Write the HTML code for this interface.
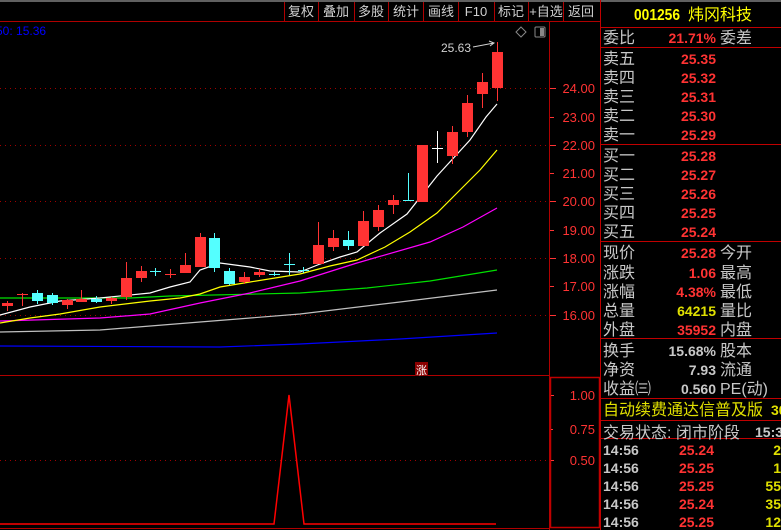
<!DOCTYPE html>
<html><head><meta charset="utf-8">
<style>
html,body{margin:0;padding:0;background:#000;width:781px;height:530px;overflow:hidden}
svg{display:block}
text{font-family:"Liberation Sans","Noto Sans CJK SC",sans-serif}
.cn{font-size:16px;fill:#c8c8c8}
.num{font-size:14px;font-weight:bold}
</style></head><body>
<svg width="781" height="530" viewBox="0 0 781 530" xmlns="http://www.w3.org/2000/svg">
<rect width="781" height="530" fill="#000"/>
<rect x="0" y="0" width="781" height="2" fill="#606060"/>
<g stroke="#b00000" stroke-width="1" shape-rendering="crispEdges">
<line x1="0" y1="21.5" x2="600" y2="21.5"/>
<line x1="284.5" y1="2" x2="284.5" y2="21"/>
<line x1="318.5" y1="2" x2="318.5" y2="21"/>
<line x1="354.5" y1="2" x2="354.5" y2="21"/>
<line x1="388.5" y1="2" x2="388.5" y2="21"/>
<line x1="423.5" y1="2" x2="423.5" y2="21"/>
<line x1="458.5" y1="2" x2="458.5" y2="21"/>
<line x1="494.5" y1="2" x2="494.5" y2="21"/>
<line x1="528.5" y1="2" x2="528.5" y2="21"/>
<line x1="563.5" y1="2" x2="563.5" y2="21"/>
<line x1="549.5" y1="22" x2="549.5" y2="530"/>
<line x1="0" y1="375.5" x2="549" y2="375.5"/>
</g>
<g font-size="13" fill="#d0d0d0">
<text x="301" y="16" text-anchor="middle">复权</text>
<text x="336" y="16" text-anchor="middle">叠加</text>
<text x="371" y="16" text-anchor="middle">多股</text>
<text x="406" y="16" text-anchor="middle">统计</text>
<text x="441" y="16" text-anchor="middle">画线</text>
<text x="476" y="16" text-anchor="middle">F10</text>
<text x="511" y="16" text-anchor="middle">标记</text>
<text x="546" y="16" text-anchor="middle">+自选</text>
<text x="581" y="16" text-anchor="middle">返回</text>
</g>
<text x="-4" y="35" font-size="12" fill="#0000ff">50: 15.36</text>
<path d="M521 27 L526 32 L521 37 L516 32 Z" fill="none" stroke="#888" stroke-width="1"/>
<rect x="535" y="27" width="10" height="10" rx="1" fill="none" stroke="#888"/>
<rect x="540" y="28" width="4" height="8" fill="#888"/>
<g stroke="#a00000" stroke-width="1" stroke-dasharray="1,4" shape-rendering="crispEdges">
<line x1="0" y1="88.5" x2="549" y2="88.5"/>
<line x1="0" y1="145.5" x2="549" y2="145.5"/>
<line x1="0" y1="201.5" x2="549" y2="201.5"/>
<line x1="0" y1="258.5" x2="549" y2="258.5"/>
<line x1="0" y1="315.5" x2="549" y2="315.5"/>
<line x1="0" y1="460.5" x2="549" y2="460.5"/>
</g>
<g stroke="#ff3333" shape-rendering="crispEdges">
<line x1="550" y1="88.5" x2="556" y2="88.5"/><line x1="550" y1="117.5" x2="554" y2="117.5"/>
<line x1="550" y1="145.5" x2="556" y2="145.5"/><line x1="550" y1="173.5" x2="554" y2="173.5"/>
<line x1="550" y1="201.5" x2="556" y2="201.5"/><line x1="550" y1="230.5" x2="554" y2="230.5"/>
<line x1="550" y1="258.5" x2="556" y2="258.5"/><line x1="550" y1="286.5" x2="554" y2="286.5"/>
<line x1="550" y1="315.5" x2="556" y2="315.5"/>
</g>
<g font-size="13" fill="#ff3333" text-anchor="end">
<text x="595" y="93">24.00</text><text x="595" y="122">23.00</text>
<text x="595" y="150">22.00</text><text x="595" y="178">21.00</text>
<text x="595" y="206">20.00</text><text x="595" y="235">19.00</text>
<text x="595" y="263">18.00</text><text x="595" y="291">17.00</text>
<text x="595" y="320">16.00</text>
</g>
<g fill="none" stroke-width="1.2">
<polyline stroke="#0000ff" points="0,346 220,347 300,344 400,339 497,333"/>
<polyline stroke="#c0c0c0" points="0,332 100,330 200,322 300,314 400,302 497,290"/>
<polyline stroke="#00e000" points="0,298 130,298 170,296 300,293 367,288 430,281 497,270"/>
<polyline stroke="#ff00ff" points="0,321 100,318 150,314 200,303 250,293 300,281 357,263 430,242 463,227 497,208"/>
<polyline stroke="#ffff00" points="0,323 30,318 60,314 100,307 150,301 180,298 200,294 220,287 250,282 300,274 330,266 357,260 385,247 410,232 437,213 460,190 480,170 497,150"/>
<polyline stroke="#ffffff" points="0,315 30,307 60,301 100,298 150,293 170,287 190,282 200,270 220,263 250,267 270,271 300,272 320,264 340,257 357,252 380,233 407,214 437,176 470,140 486,117 497,104"/>
</g>
<g shape-rendering="crispEdges" id="c"></g>
<text x="441" y="52" font-size="12" fill="#d0d0d0">25.63</text>
<path d="M473 47 L494 43 M489 41 L494 43 L490 46" stroke="#d0d0d0" fill="none"/>
<rect x="415" y="362" width="13" height="14" fill="#8b0000"/>
<text x="421.5" y="374" font-size="11" fill="#fff" text-anchor="middle">涨</text>
<rect x="550.5" y="377.5" width="49" height="150" fill="none" stroke="#c00000" stroke-width="1.5"/>
<g stroke="#ff3333" shape-rendering="crispEdges">
<line x1="551" y1="395.5" x2="554" y2="395.5"/><line x1="551" y1="429.5" x2="553" y2="429.5"/><line x1="551" y1="460.5" x2="554" y2="460.5"/>
</g>
<g font-size="13" fill="#ff3333" text-anchor="end">
<text x="595" y="400">1.00</text><text x="595" y="434">0.75</text><text x="595" y="465">0.50</text>
</g>
<polyline fill="none" stroke="#ff0000" stroke-width="1.5" points="0,524 274,524 289,395 304,524 496,524"/>
<line x1="0" y1="528.5" x2="549" y2="528.5" stroke="#b00000"/>
<g stroke="#c00000" stroke-width="1" shape-rendering="crispEdges">
<line x1="600.5" y1="0" x2="600.5" y2="530"/>
<line x1="600" y1="27.5" x2="781" y2="27.5"/>
<line x1="600" y1="47.5" x2="781" y2="47.5"/>
<line x1="600" y1="144.5" x2="781" y2="144.5"/>
<line x1="600" y1="241.5" x2="781" y2="241.5"/>
<line x1="600" y1="338.5" x2="781" y2="338.5"/>
<line x1="600" y1="398.5" x2="781" y2="398.5"/>
<line x1="600" y1="420.5" x2="781" y2="420.5"/>
<line x1="600" y1="438.5" x2="781" y2="438.5"/>
</g>
<text x="634" y="20" font-size="16" font-weight="bold" fill="#ffff00" textLength="46" lengthAdjust="spacingAndGlyphs">001256</text>
<text x="688" y="20" font-size="16" fill="#ffff00">炜冈科技</text>
<g class="cn">
<text x="603" y="43">委比</text><text x="720" y="43">委差</text>
<text x="603" y="64">卖五</text><text x="603" y="83">卖四</text><text x="603" y="102">卖三</text><text x="603" y="121">卖二</text><text x="603" y="140">卖一</text>
<text x="603" y="161">买一</text><text x="603" y="180">买二</text><text x="603" y="199">买三</text><text x="603" y="218">买四</text><text x="603" y="237">买五</text>
<text x="603" y="258">现价</text><text x="720" y="258">今开</text>
<text x="603" y="278">涨跌</text><text x="720" y="278">最高</text>
<text x="603" y="297">涨幅</text><text x="720" y="297">最低</text>
<text x="603" y="316">总量</text><text x="720" y="316">量比</text>
<text x="603" y="335">外盘</text><text x="720" y="335">内盘</text>
<text x="603" y="356">换手</text><text x="720" y="356">股本</text>
<text x="603" y="375">净资</text><text x="720" y="375">流通</text>
<text x="603" y="394">收益㈢</text><text x="720" y="394">PE(动)</text>
<text x="603" y="438">交易状态: 闭市阶段</text>
</g>
<text x="603" y="415" font-size="16" fill="#e0e000">自动续费通达信普及版</text>
<text x="771" y="415" font-size="14" font-weight="bold" fill="#e0e000">30</text>
<text x="755" y="437" font-size="14" font-weight="bold" fill="#c8c8c8">15:33:</text>
<g class="num" text-anchor="end" fill="#ff3333">
<text x="716" y="43">21.71%</text>
<text x="716" y="64">25.35</text><text x="716" y="83">25.32</text><text x="716" y="102">25.31</text><text x="716" y="121">25.30</text><text x="716" y="140">25.29</text>
<text x="716" y="161">25.28</text><text x="716" y="180">25.27</text><text x="716" y="199">25.26</text><text x="716" y="218">25.25</text><text x="716" y="237">25.24</text>
<text x="716" y="258">25.28</text>
<text x="716" y="278">1.06</text><text x="716" y="297">4.38%</text>
<text x="716" y="316" fill="#e0e000">64215</text>
<text x="716" y="335">35952</text>
<text x="716" y="356" fill="#c8c8c8">15.68%</text>
<text x="716" y="375" fill="#c8c8c8">7.93</text>
<text x="716" y="394" fill="#c8c8c8">0.560</text>
<text x="714" y="455">25.24</text><text x="714" y="473">25.25</text><text x="714" y="491">25.25</text><text x="714" y="509">25.24</text><text x="714" y="527">25.25</text>
</g>
<g class="num" fill="#c8c8c8">
<text x="603" y="455">14:56</text><text x="603" y="473">14:56</text><text x="603" y="491">14:56</text><text x="603" y="509">14:56</text><text x="603" y="527">14:56</text>
</g>
<g class="num" fill="#e0e000" text-anchor="end">
<text x="781" y="455">2</text><text x="781" y="473">1</text><text x="781" y="491">55</text><text x="781" y="509">35</text><text x="781" y="527">12</text>
</g>
</svg>
<script>
var d=[[7,303,306,301,311,'r'],[22,294,295,293,306,'r'],[37,293,301,290,304,'c'],[52,295,303,293,305,'c'],[67,300,305,299,309,'r'],[81,299,302,290,302,'r'],[96,299,302,296,303,'c'],[111,298,301,297,304,'r'],[126,278,297,262,300,'r'],[141,271,278,266,282,'r'],[155,271,272,268,276,'c'],[170,274,275,269,278,'r'],[185,265,273,253,273,'r'],[200,237,267,233,267,'r'],[214,238,268,233,272,'c'],[229,271,284,268,285,'c'],[244,277,282,272,284,'r'],[259,272,275,269,277,'r'],[274,274,275,272,276,'c'],[289,264,265,253,275,'c'],[303,270,271,267,273,'c'],[318,245,264,222,264,'r'],[333,238,247,230,251,'r'],[348,240,246,231,250,'c'],[363,221,246,211,246,'r'],[378,210,227,205,231,'r'],[393,200,205,195,214,'r'],[408,200,201,173,201,'c'],[422,145,202,145,202,'r'],[437,148,149,131,163,'w'],[452,132,156,126,164,'r'],[467,103,132,95,137,'r'],[482,82,94,73,108,'r'],[497,52,88,42,101,'r']];
var col={r:'#ff3333',c:'#54ffff',w:'#ffffff'},g=document.getElementById('c'),s='';
d.forEach(function(a){var c=col[a[5]];s+='<rect x="'+(a[0])+'" y="'+a[3]+'" width="1" height="'+(a[4]-a[3])+'" fill="'+c+'"/>';var h=a[2]-a[1];if(h<=1){s+='<rect x="'+(a[0]-5)+'" y="'+a[1]+'" width="11" height="1" fill="'+c+'"/>';}else{s+='<rect x="'+(a[0]-5)+'" y="'+a[1]+'" width="11" height="'+h+'" fill="'+c+'"/>';}});
g.innerHTML=s;
</script>
</body></html>
